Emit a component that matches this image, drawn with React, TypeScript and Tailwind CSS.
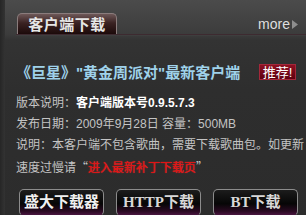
export default function App() {
  const cn = '"Liberation Sans", "Noto Sans CJK SC", sans-serif';
  const cjk = '"Noto Sans CJK SC", sans-serif';

  return (
    <div
      className="w-[306px] h-[215px] overflow-hidden bg-[linear-gradient(to_bottom,#4b4b4b_0px,#3c3c3c_34px,#333333_40px,#2e2e2e_90px,#2c2c2c_100%)] text-[#c4c4c4] relative"
      style={{ fontFamily: cn }}
    >
      {/* left edge shade */}
      <div className="absolute left-0 top-0 bottom-0 w-[5px] bg-[linear-gradient(to_right,#262626,#333333)]" />

      {/* HEADER */}
      <div className="ml-[16px] pt-[13px] flex items-end justify-between border-b border-[#3d2a30] shadow-[0_1px_0_#3e3e3e]">
        <div className="ml-[1px] w-[100px] h-[21px] rounded-t-[5px] border border-b-0 border-[#8a7c7c] bg-[linear-gradient(to_bottom,#6e5858,#3a2222_45%,#1c0a0a)] flex items-center justify-center">
          <span className="text-[15px] font-bold leading-none text-[#e6e6e6] tracking-[0.5px]">
            客户端下载
          </span>
        </div>
        <div className="flex items-center pr-[8px] pb-[3px] gap-[2px]">
          <span className="text-[14px] leading-none text-[#dedede]">more</span>
          <svg width="6" height="9" viewBox="0 0 6 9">
            <path d="M0 0 L6 4.5 L0 9 Z" fill="#8e8e8e" />
          </svg>
        </div>
      </div>

      {/* TITLE */}
      <div className="mt-[28px] pl-[16px] pr-[10px] flex items-center justify-between h-[18px]">
        <span className="text-[15px] font-bold leading-none text-[#9fd2ea] whitespace-nowrap">
          《巨星》"黄金周派对"最新客户端
        </span>
        <span className="h-[16px] w-[37px] flex items-center justify-center bg-[linear-gradient(to_bottom,#8e1022,#5e0010)] border border-[#a3283a] text-[13px] leading-none text-white">
          推荐!
        </span>
      </div>

      {/* INFO */}
      <div className="mt-[12px] pl-[16px] text-[12px] leading-[21px] whitespace-nowrap">
        <div>
          版本说明：<span className="font-bold text-white">客户端版本号0.9.5.7.3</span>
        </div>
        <div>发布日期：2009年9月28日 容量：500MB</div>
        <div>说明：本客户端不包含歌曲，需要下载歌曲包。如更新</div>
        <div>
          速度过慢请<span style={{ fontFamily: cjk }}>“</span>
          <span className="text-[#e01414] [text-shadow:0_0_1px_#ff3030]">
            进入最新补丁下载页
          </span>
          <span style={{ fontFamily: cjk }}>”</span>
        </div>
      </div>

      {/* BUTTONS */}
      <div className="mt-[10px] pl-[19px] flex gap-[12px]">
        {["盛大下载器", "HTTP下载", "BT下载"].map((label, i) => (
          <button
            key={label}
            className="w-[85px] h-[27px] rounded-[5px] border border-[#8c8c8c] border-b-[#4a2440] bg-[linear-gradient(to_bottom,#1c1c1c,#060606_55%,#2a0a22_85%,#4a1640)] flex items-center justify-center"
          >
            <span
              className={`text-[15px] font-bold leading-none ${
                i === 0 ? "text-[#f0f0f0]" : "text-[#d8d8d8]"
              }`}
              style={{ fontFamily: '"Liberation Serif", "Noto Sans CJK SC", serif' }}
            >
              {label}
            </span>
          </button>
        ))}
      </div>
    </div>
  );
}
